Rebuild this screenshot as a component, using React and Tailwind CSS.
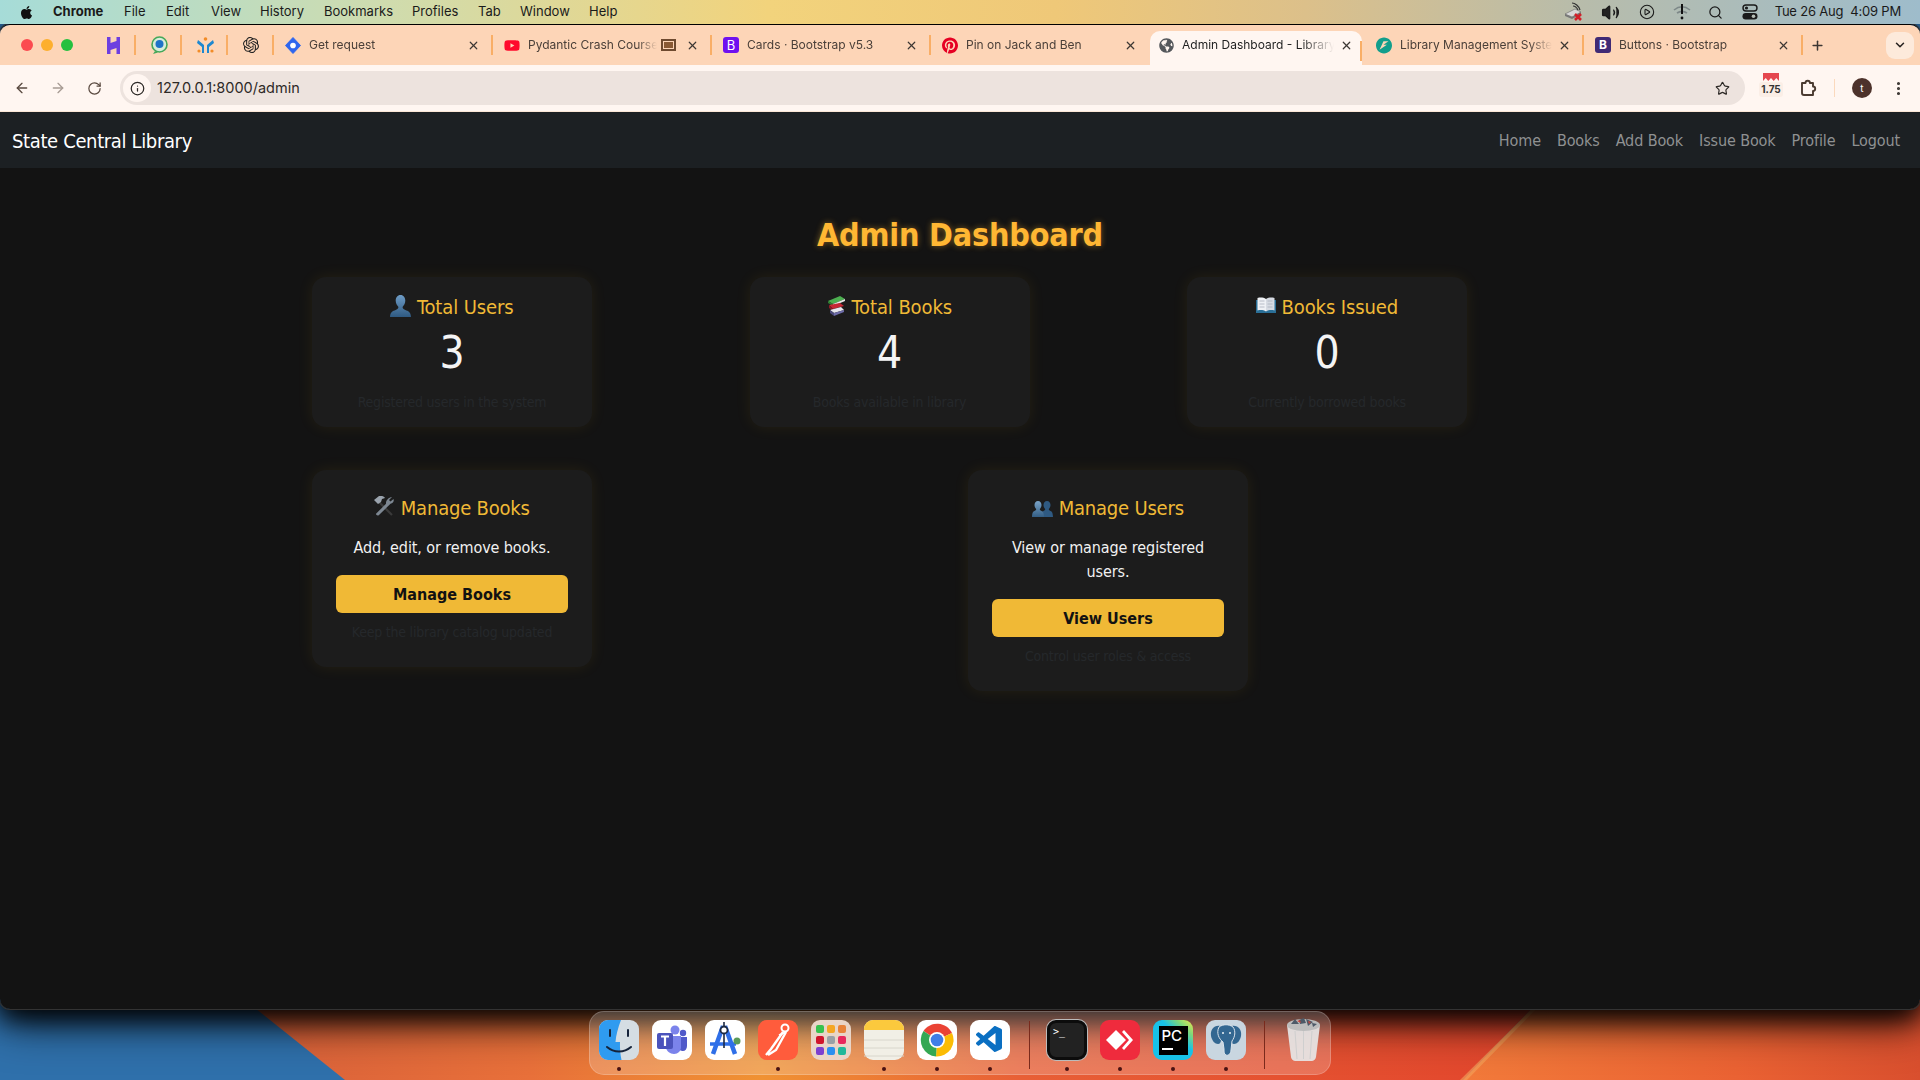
import React from 'react';
import {
  ArrowLeft, ArrowRight, RotateCw, Info, Star, EllipsisVertical,
  X, Plus, ChevronDown, Search, Volume2, CirclePlay,
} from 'lucide-react';
import { FaApple, FaYoutube, FaPinterest, FaGlobeAmericas } from 'react-icons/fa';
import { SiOpenai, SiFastapi } from 'react-icons/si';
import { VscVscode } from 'react-icons/vsc';

const menuItems = [
  { name: 'File', w: 'w-[42px]' },
  { name: 'Edit', w: 'w-[45px]' },
  { name: 'View', w: 'w-[49px]' },
  { name: 'History', w: 'w-[64px]' },
  { name: 'Bookmarks', w: 'w-[88px]' },
  { name: 'Profiles', w: 'w-[66px]' },
  { name: 'Tab', w: 'w-[42px]' },
  { name: 'Window', w: 'w-[69px]' },
  { name: 'Help', w: 'w-[40px]' },
];

const navLinks = ['Home', 'Books', 'Add Book', 'Issue Book', 'Profile', 'Logout'];

// wallpaper only shows below the window
const Wallpaper = () => (
  <svg className="absolute inset-0" width="1920" height="1080" viewBox="0 0 1920 1080">
    <defs>
      <linearGradient id="wpOrange" x1="0" y1="0" x2="1" y2="0">
        <stop offset="0" stopColor="#d9613a" />
        <stop offset="0.22" stopColor="#e8703a" />
        <stop offset="0.4" stopColor="#f09233" />
        <stop offset="0.6" stopColor="#e85f36" />
        <stop offset="1" stopColor="#e2452c" />
      </linearGradient>
      <linearGradient id="wpRight" x1="0" y1="0" x2="1" y2="0">
        <stop offset="0" stopColor="#f27a3a" />
        <stop offset="0.6" stopColor="#ea6233" />
        <stop offset="1" stopColor="#d94f2e" />
      </linearGradient>
    </defs>
    <rect width="1920" height="1080" fill="#2f70ab" />
    <polygon points="245,1000 1540,1000 1463,1080 345,1080" fill="url(#wpOrange)" />
    <polygon points="1540,1000 1920,1000 1920,1080 1463,1080" fill="url(#wpRight)" />
    <polygon points="1536,1005 1540,1005 1467,1080 1460,1080" fill="#f5a35c" opacity="0.6" />
  </svg>
);

const WifiOff = () => (
  <svg width="20" height="18" viewBox="0 0 20 18" fill="none">
    <path d="M2 7c5-4 11-4 16 0M5 10c3-2 7-2 10 0" stroke="#1f2937" strokeOpacity="0.35" strokeWidth="1.6" />
    <path d="M10 1v10" stroke="#111" strokeWidth="2" />
    <circle cx="10" cy="15" r="1.4" fill="#111" />
  </svg>
);

const ControlCenter = () => (
  <svg width="16" height="16" viewBox="0 0 16 16">
    <rect x="1" y="1" width="14" height="6" rx="3" fill="none" stroke="#1a1a1a" strokeWidth="1.4" />
    <circle cx="4.5" cy="4" r="1.6" fill="#1a1a1a" />
    <rect x="0.5" y="9" width="15" height="6.5" rx="3.2" fill="#1a1a1a" />
    <circle cx="11.5" cy="12.2" r="1.8" fill="#b6bdb5" />
  </svg>
);

const DiskIcon = () => (
  <svg width="20" height="20" viewBox="0 0 20 20">
    <path d="M1 12l10-5 6 3-9 5z" fill="#d8d8d8" stroke="#555" strokeWidth="0.5" />
    <path d="M1 12v2l7 3 9-5v-2l-9 5z" fill="#777" />
    <path d="M8 1c3 0 7 3 8 7M9 4c2 0 4 2 5 4" fill="none" stroke="#333" strokeWidth="1.2" />
    <path d="M11 12l6 6M17 12l-6 6" stroke="#d1202a" strokeWidth="2.6" />
  </svg>
);

const MenuBar = () => (
  <div className="relative z-10 flex h-6 shrink-0 items-center bg-[linear-gradient(90deg,#a6dcd8_0%,#cfdcae_20%,#f2d37c_40%,#efc878_55%,#dcc08a_68%,#b8bcaa_82%,#9ebccb_100%)] text-[13px] text-[#1a1a1a]">
    <FaApple className="ml-[19px] text-[15px] text-[#111]" />
    <span className="ml-[19px] w-[71px] font-bold">Chrome</span>
    {menuItems.map((m) => (
      <span key={m.name} className={m.w}>{m.name}</span>
    ))}
    <div className="ml-auto flex items-center">
      <span className="flex w-[37px] justify-center"><DiskIcon /></span>
      <span className="flex w-[36px] justify-center"><Volume2 size={19} strokeWidth={1.6} fill="#222" /></span>
      <span className="flex w-[36px] justify-center"><CirclePlay size={16} strokeWidth={1.6} /></span>
      <span className="flex w-[34px] justify-center"><WifiOff /></span>
      <span className="flex w-[34px] justify-center"><Search size={15} strokeWidth={2} /></span>
      <span className="flex w-[34px] justify-center"><ControlCenter /></span>
      <span className="ml-[8px] mr-[19px] whitespace-pre tracking-[-0.015em]">Tue 26 Aug  4:09 PM</span>
    </div>
  </div>
);

const HubIcon = () => (
  <svg width="15" height="17" viewBox="0 0 15 17">
    <path d="M1 0h3.5v6l6-2V0H14v17h-3.5v-6l-6 2v4H1z" fill="#6d3fe0" />
  </svg>
);
const ChatIcon = () => (
  <svg width="17" height="18" viewBox="0 0 17 18">
    <circle cx="8.5" cy="8.5" r="7.5" fill="#d7ecd8" stroke="#45a85a" strokeWidth="1.6" />
    <circle cx="8.5" cy="8" r="4" fill="#1e73c8" />
    <path d="M4 15l-2 3 5-1.5z" fill="#45a85a" />
  </svg>
);
const CrossIcon = () => (
  <svg width="17" height="17" viewBox="0 0 17 17">
    <circle cx="8.5" cy="2" r="1.8" fill="#f28c28" />
    <path d="M1 3l6 5v8H5v-6L0 6zM16 3l-6 5v8h2v-6l5-4z" fill="#1e88d0" />
    <circle cx="2" cy="14" r="1.6" fill="#f28c28" />
    <circle cx="15" cy="14" r="1.6" fill="#f28c28" />
  </svg>
);
const DiamondIcon = () => (
  <svg width="17" height="17" viewBox="0 0 17 17">
    <path d="M8.5 0l8 8.5-8 8.5-8-8.5z" fill="#2f66ee" stroke="#2f66ee" strokeLinejoin="round" />
    <circle cx="8.5" cy="8.5" r="3" fill="#fff" />
  </svg>
);
const BsPurple = () => (
  <span className="flex h-4 w-4 items-center justify-center rounded-[3px] bg-[#6f10ef] text-[13px] leading-none text-white">B</span>
);
const BsDark = () => (
  <span className="flex h-4 w-4 items-center justify-center rounded-[3px] bg-[#3f2a75] text-[12px] font-bold leading-none text-white">B</span>
);

const Tab = ({ icon, title, extra, active, noSep, className = '' }) => (
  <div className={active
    ? 'relative flex h-[34px] w-[212px] shrink-0 items-center self-end rounded-t-[10px] bg-[#fff6f1] pb-[6px] pl-[8px] pr-[9px]'
    : `relative flex h-[40px] w-[219px] shrink-0 items-center pl-[11px] pr-[13px] ${className}`}>
    <span className="flex w-[16px] shrink-0 justify-center">{icon}</span>
    <span className={active
      ? 'ml-[8px] flex-1 overflow-hidden whitespace-nowrap text-[12px] text-[#1f1f1f] [mask-image:linear-gradient(90deg,#000_78%,transparent)]'
      : 'ml-[8px] flex-1 overflow-hidden whitespace-nowrap text-[12px] text-[#4a3f38] [mask-image:linear-gradient(90deg,#000_85%,transparent)]'}>
      {title}
    </span>
    {extra}
    <X size={13} strokeWidth={2.2} className="ml-[6px] shrink-0 text-[#3c3733]" />
    {!noSep && <span className="absolute right-0 top-[10px] h-[20px] w-[2px] bg-[#f9ae66]" />}
  </div>
);

const PinnedTab = ({ children }) => (
  <div className="relative flex h-[40px] w-[46px] shrink-0 items-center justify-center">
    {children}
    <span className="absolute right-0 top-[10px] h-[20px] w-[2px] bg-[#f9ae66]" />
  </div>
);

const TabStrip = () => (
  <div className="flex h-[40px] shrink-0 items-center bg-[#fdd5b7]">
    <div className="flex w-[90px] shrink-0 items-center gap-[8px] pl-[21px]">
      <span className="h-3 w-3 rounded-full bg-[#fb4b50]" />
      <span className="h-3 w-3 rounded-full bg-[#fdaf2d]" />
      <span className="h-3 w-3 rounded-full bg-[#24c03f]" />
    </div>
    <PinnedTab><HubIcon /></PinnedTab>
    <PinnedTab><ChatIcon /></PinnedTab>
    <PinnedTab><CrossIcon /></PinnedTab>
    <PinnedTab><SiOpenai size={16} className="text-[#222]" /></PinnedTab>
    <Tab icon={<DiamondIcon />} title="Get request" />
    <Tab
      icon={<FaYoutube size={17} className="text-[#ff0a2c]" />}
      title="Pydantic Crash Course"
      extra={<span className="ml-[4px] mr-[4px] flex h-[12px] w-[15px] shrink-0 items-center justify-center border-2 border-[#6e4a2f]"><span className="h-[6px] w-[9px] bg-[#8a5a34]" /></span>}
    />
    <Tab icon={<BsPurple />} title="Cards · Bootstrap v5.3" />
    <Tab icon={<FaPinterest size={17} className="text-[#e60023]" />} title="Pin on Jack and Ben" noSep />
    <Tab active icon={<FaGlobeAmericas size={15} className="text-[#55585c]" />} title="Admin Dashboard - Library" />
    <Tab className="ml-[3px]" icon={<SiFastapi size={17} className="text-[#129e8c]" />} title="Library Management System" />
    <Tab icon={<BsDark />} title="Buttons · Bootstrap" />
    <Plus size={15} strokeWidth={2.4} className="ml-[7px] text-[#3c3733]" />
    <div className="ml-auto mr-[6px] flex h-[27px] w-[28px] items-center justify-center rounded-[9px] bg-[#fdeadb]">
      <ChevronDown size={14} strokeWidth={2.6} className="text-[#2a2522]" />
    </div>
  </div>
);

const RulerIcon = () => (
  <svg width="16" height="8" viewBox="0 0 16 8">
    <path d="M0 0h16v8l-2.7-3-2.6 3-2.7-3-2.7 3-2.6-3L0 8z" fill="#e5474f" />
  </svg>
);

const ExtensionIcon = () => (
  <svg width="18" height="18" viewBox="0 0 18 18" fill="none" stroke="#4a3a30" strokeWidth="1.9" strokeLinejoin="round">
    <path d="M3 4h3.5a2.2 2.2 0 0 1 4.4 0H14v3.500a2.2 2.2 0 0 1 0 4.400V16H5c-1 0-2-1-2-2z" />
  </svg>
);

const Toolbar = () => (
  <div className="flex h-[47px] shrink-0 items-center border-b border-[#fbe6d6] bg-[#fff6f1]">
    <div className="flex w-[120px] shrink-0 items-center text-[#5a4a40]">
      <ArrowLeft size={16} strokeWidth={2} className="ml-[14px]" />
      <ArrowRight size={16} strokeWidth={2} className="ml-[20px] text-[#a89c94]" />
      <RotateCw size={15} strokeWidth={2} className="ml-[21px]" />
    </div>
    <div className="flex h-[34px] w-[1625px] shrink-0 items-center rounded-full bg-[#ede3de]">
      <span className="ml-[3px] flex h-[28px] w-[28px] items-center justify-center rounded-full bg-[#fff6f1]">
        <Info size={15} strokeWidth={2} className="text-[#2e2a27]" />
      </span>
      <span className="ml-[6px] text-[14.5px] text-[#2e2a27]">127.0.0.1:8000/admin</span>
      <Star size={15} strokeWidth={1.9} className="ml-auto mr-[15px] text-[#2e2a27]" />
    </div>
    <div className="ml-[14px] flex h-[30px] w-[24px] shrink-0 flex-col items-center">
      <RulerIcon />
      <span className="mt-[1px] rounded-[3px] bg-[#fbeee6] px-[2px] text-[10px] font-bold leading-[15px] text-[#333]">1.75</span>
    </div>
    <span className="ml-[16px]"><ExtensionIcon /></span>
    <span className="ml-[17px] h-[18px] w-[1px] bg-[#fbd9bd]" />
    <span className="ml-[17px] flex h-[20px] w-[20px] items-center justify-center rounded-full bg-[#4d322b] text-[10px] text-white">t</span>
    <EllipsisVertical size={17} strokeWidth={2.4} className="ml-[18px] text-[#3c3733]" />
  </div>
);

const Navbar = () => (
  <nav className="flex h-14 shrink-0 items-center justify-between bg-[#1c2023] pl-3 pr-3 pt-[1px] [font-family:'DejaVu_Sans',sans-serif] [font-stretch:condensed]">
    <span className="text-[20px] tracking-[-0.018em] text-white">State Central Library</span>
    <div className="flex">
      {navLinks.map((l) => (
        <span key={l} className="px-2 text-[16px] tracking-[-0.007em] text-[#8f9192]">{l}</span>
      ))}
    </div>
  </nav>
);

const PersonEmoji = () => (
  <svg width="21" height="22" viewBox="0 0 21 22" className="inline-block align-[-3px]">
    <defs>
      <linearGradient id="personFill" x1="0" y1="0" x2="0" y2="1">
        <stop offset="0" stopColor="#6e9cc6" />
        <stop offset="1" stopColor="#2f5a82" />
      </linearGradient>
    </defs>
    <path d="M10.5 0c3 0 4.8 2.6 4.8 5.6 0 2.8-1.3 5-2.6 6.2-.4 1.4.5 2.4 2.6 3.2 2.8 1.1 5.4 1.8 5.7 7H0c.3-5.2 2.9-5.9 5.7-7 2.1-.8 3-1.8 2.6-3.2-1.3-1.2-2.6-3.4-2.6-6.2C5.7 2.6 7.5 0 10.5 0z" fill="url(#personFill)" />
  </svg>
);

const BooksEmoji = () => (
  <svg width="19" height="20" viewBox="0 0 19 20" className="inline-block align-[-2px]">
    <path d="M1 5l12-5 5 3-12 5z" fill="#4caf50" />
    <path d="M1 5l5 3v2L1 7z" fill="#2e7d32" />
    <path d="M6 8l12-5v2L6 10z" fill="#e8e8e8" />
    <path d="M2 9l11-2 4 3-11 3z" fill="#c62834" />
    <path d="M2 9l4 4v2L2 12z" fill="#8e1c26" />
    <path d="M3 14l11-3 3 3-10 3z" fill="#e7e7ee" />
    <path d="M3 14l4 3v3l-4-3z" fill="#4b4a7c" />
    <path d="M7 17l10-3v2L7 20z" fill="#6d6ca8" />
  </svg>
);

const OpenBookEmoji = () => (
  <svg width="20" height="17" viewBox="0 0 20 17" className="inline-block align-[0px]">
    <path d="M0 3h20v13H0z" fill="#2a6f97" />
    <path d="M1.5 1c3-.8 6-.6 8.5 1v12.5c-2.5-1.5-5.5-1.8-8.5-1z" fill="#eef1f5" />
    <path d="M18.5 1c-3-.8-6-.6-8.5 1v12.5c2.5-1.5 5.5-1.8 8.5-1z" fill="#d6dbe3" />
    <path d="M3.5 4h5M3.5 7h5M3.5 10h5M11.5 4h5M11.5 7h5M11.5 10h5" stroke="#a9b1bd" strokeWidth="0.8" />
  </svg>
);

const ToolsEmoji = () => (
  <svg width="21" height="20" viewBox="0 0 21 20" className="inline-block align-[-1px]">
    <path d="M4 5l14 14" stroke="#3a3a3a" strokeWidth="2.2" />
    <path d="M0 4l5-4c3-.5 5 .4 6 2L8 3 7 6 4 8z" fill="#9aa3ad" />
    <path d="M18 1l-3 3 1.5 1.5 3-2.5c.8 2.3-.5 4.500-3 4.800L5 19c-1 1-3 .5-3-1.200l10-10c-.4-3 2.500-6.500 6-6.800z" fill="#7d8792" />
  </svg>
);

const BustsEmoji = () => (
  <svg width="21" height="17" viewBox="0 0 21 17" className="inline-block align-[-2px]">
    <defs>
      <linearGradient id="bustFill" x1="0" y1="0" x2="0" y2="1">
        <stop offset="0" stopColor="#7aa4c8" />
        <stop offset="1" stopColor="#335e85" />
      </linearGradient>
    </defs>
    <path d="M15 1c2.2 0 3.5 1.8 3.5 4 0 1.8-.8 3.2-1.7 4 0 1 .6 1.5 1.7 2 1.5.6 2.3 1.500 2.500 6H9c.2-4.500 1-5.400 2.500-6 1.100-.5 1.700-1 1.700-2-.9-.8-1.700-2.200-1.700-4 0-2.200 1.300-4 3.500-4z" fill="#2f5a82" />
    <path d="M6 1c2.2 0 3.5 1.800 3.500 4 0 1.800-.8 3.200-1.700 4 0 1 .6 1.500 1.700 2 1.500.6 2.300 1.500 2.500 6H0c.2-4.500 1-5.400 2.500-6 1.100-.5 1.700-1 1.700-2C3.300 8.200 2.500 6.800 2.500 5 2.500 2.800 3.800 1 6 1z" fill="url(#bustFill)" />
  </svg>
);

const StatCard = ({ icon, title, value, note }) => (
  <div className="w-[280px] rounded-[14px] bg-[#1c1c1c] px-3 pb-[14px] pt-[18px] text-center shadow-[0_0_16px_rgba(255,193,7,0.08)]">
    <h5 className="text-[20px] leading-6 tracking-[-0.005em] text-[#f0b936]">{icon} {title}</h5>
    <div className="mt-[7px] text-[44px] leading-[53px] text-[#f4f4f4]">{value}</div>
    <p className="mt-[13px] text-[14px] leading-[21px] tracking-[-0.015em] text-[#25282b]">{note}</p>
  </div>
);

const ActionCard = ({ icon, title, text, button, note }) => (
  <div className="w-[280px] rounded-[14px] bg-[#1c1c1c] px-6 pb-6 pt-[26px] text-center shadow-[0_0_16px_rgba(255,193,7,0.08)]">
    <h5 className="text-[20px] leading-6 tracking-[-0.01em] text-[#f0b936]">{icon} {title}</h5>
    <p className="mt-4 text-[16px] leading-6 tracking-[-0.006em] text-[#f1f1f1]">{text}</p>
    <button className="mt-[15px] h-[38px] w-full rounded-[6px] bg-[#f0b936] pt-[1px] text-[16px] font-bold text-[#121212]">{button}</button>
    <p className="mt-[9px] text-[14px] leading-[21px] tracking-[-0.015em] text-[#25282b]">{note}</p>
  </div>
);

const Dashboard = () => (
  <main className="flex-1 bg-[#131313] pt-12 [font-family:'DejaVu_Sans',sans-serif] [font-stretch:condensed]">
    <h1 className="text-center text-[32px] font-bold leading-[38px] tracking-[-0.006em] text-[#ffb733] [text-shadow:0_0_6px_rgba(255,183,51,0.45)]">
      Admin Dashboard
    </h1>
    <div className="mt-[23px] flex gap-[157.5px] pl-[312px]">
      <StatCard icon={<PersonEmoji />} title="Total Users" value="3" note="Registered users in the system" />
      <StatCard icon={<BooksEmoji />} title="Total Books" value="4" note="Books available in library" />
      <StatCard icon={<OpenBookEmoji />} title="Books Issued" value="0" note="Currently borrowed books" />
    </div>
    <div className="mt-[43px] flex items-start gap-[376px] pl-[312px]">
      <ActionCard icon={<ToolsEmoji />} title="Manage Books" text="Add, edit, or remove books." button="Manage Books" note="Keep the library catalog updated" />
      <ActionCard icon={<BustsEmoji />} title="Manage Users" text="View or manage registered users." button="View Users" note="Control user roles & access" />
    </div>
  </main>
);

const DockTile = ({ className, children, dot }) => (
  <div className="relative flex h-[40px] w-[40px] shrink-0 items-center justify-center">
    <div className={className}>{children}</div>
    {dot && <span className="absolute bottom-[-11px] left-[18px] h-[4px] w-[4px] rounded-full bg-[#4a1212]" />}
  </div>
);

const whiteTile = 'flex h-[40px] w-[40px] items-center justify-center rounded-[9px] bg-white';

const FinderIcon = () => (
  <svg width="40" height="40" viewBox="0 0 40 40">
    <rect width="40" height="40" rx="9" fill="#d5dde3" />
    <path d="M9 0h13c-3 8-5 15-5.5 22H21c-.2 6 .2 12 1.5 18H9a9 9 0 0 1-9-9V9a9 9 0 0 1 9-9z" fill="#2f9bf0" />
    <path d="M11 10v6M29 10v6" stroke="#15233a" strokeWidth="2" strokeLinecap="round" />
    <path d="M8 27c7 6 17 6 24 0" fill="none" stroke="#15233a" strokeWidth="2" strokeLinecap="round" />
  </svg>
);
const TeamsIcon = () => (
  <svg width="32" height="32" viewBox="0 0 32 32">
    <circle cx="19" cy="6" r="4.5" fill="#7b83eb" />
    <circle cx="27" cy="9" r="3.2" fill="#5059c9" />
    <path d="M22 13h9v9c0 3-2 5-4 5s-5-1-5-5z" fill="#5059c9" />
    <path d="M10 12h15v11c0 4-3 7-7 7s-8-3-8-7z" fill="#7b83eb" />
    <rect x="1" y="9" width="16" height="16" rx="2" fill="#4b53bc" />
    <path d="M5 12.5h8M9 12.5V22" stroke="#fff" strokeWidth="2.2" />
  </svg>
);
const XcodeLikeIcon = () => (
  <svg width="34" height="36" viewBox="0 0 34 36">
    <path d="M15 4L5 32M17 4l10 28" stroke="#2f6fe8" strokeWidth="4.500" fill="none" />
    <path d="M2 22h26" stroke="#2f6fe8" strokeWidth="3.500" />
    <circle cx="16" cy="8" r="3.5" fill="#fff" stroke="#1c2a44" strokeWidth="1.8" />
    <path d="M16 0v4M16 12v14" stroke="#1c2a44" strokeWidth="1.6" />
    <circle cx="29" cy="19" r="3.5" fill="#5a9a5a" />
  </svg>
);
const PostmanIcon = () => (
  <svg width="30" height="34" viewBox="0 0 30 34">
    <circle cx="22" cy="5" r="3.5" fill="none" stroke="#fff" strokeWidth="2" />
    <path d="M20 9L8 26 3 32M23 9L13 27 5 32" fill="none" stroke="#fff" strokeWidth="2.400" />
    <path d="M16 12l7-3" stroke="#fff" strokeWidth="1.8" />
  </svg>
);
const AppsGrid = () => (
  <div className="grid grid-cols-3 gap-[3px]">
    {['bg-[#37c24e]', 'bg-[#f5a623]', 'bg-[#e8833a]', 'bg-[#d0142c]', 'bg-[#9aa0a6]', 'bg-[#e8285c]', 'bg-[#7c3fd0]', 'bg-[#2a8ff0]', 'bg-[#20b89a]'].map((c) => (
      <span key={c} className={`h-[8px] w-[8px] rounded-[2px] ${c}`} />
    ))}
  </div>
);
const NotesIcon = () => (
  <svg width="40" height="40" viewBox="0 0 40 40">
    <rect width="40" height="40" rx="9" fill="#f1efe6" />
    <path d="M0 10V9a9 9 0 0 1 9-9h22a9 9 0 0 1 9 9v1z" fill="#fbc93d" />
    <path d="M0 20h40M0 28h40M0 36h40" stroke="#d8d6cc" strokeWidth="1" />
  </svg>
);
const ChromeIcon = () => (
  <svg width="36" height="36" viewBox="0 0 36 36">
    <path d="M18 18L4.5 9A16.5 16.5 0 0 1 33 11z" fill="#ea4335" />
    <path d="M18 18L33 11a16.5 16.5 0 0 1-16 23.5z" fill="#fbbc05" />
    <path d="M18 18l-1 16.5A16.5 16.5 0 0 1 4.5 9z" fill="#34a853" />
    <circle cx="18" cy="18" r="8" fill="#fff" />
    <circle cx="18" cy="18" r="6.3" fill="#3f7ee8" />
  </svg>
);
const AnyDeskIcon = () => (
  <svg width="30" height="24" viewBox="0 0 30 24">
    <path d="M11 2l10 10-10 10L1 12z" fill="#fff" />
    <path d="M19 2l9 10-9 10-2-2 7-8-7-8z" fill="#fff" />
  </svg>
);
const ElephantIcon = () => (
  <svg width="32" height="34" viewBox="0 0 32 34">
    <path d="M10 3C4 2 0 7 1 13c1 5 4 8 7 8 2 0 3-2 3-4z" fill="#336791" />
    <path d="M22 3c6-1 10 4 9 10-1 5-4 8-7 8-2 0-3-2-3-4z" fill="#336791" />
    <path d="M9 4c4-3 10-3 14 0 3 4 2 10-1 14l-1 9c-.2 4-3 6-5 5-2-.8-2-3-2-6l-1-7C9 16 6 10 9 4z" fill="#336791" stroke="#dbe4ec" strokeWidth="1" />
    <circle cx="13" cy="10" r="1" fill="#eef3f7" />
    <circle cx="20" cy="10" r="1" fill="#eef3f7" />
  </svg>
);
const TrashIcon = () => (
  <svg width="35" height="44" viewBox="0 0 35 44">
    <path d="M1 8h33l-4 32c-.2 1.5-1.5 4-4 4H9c-2.5 0-3.8-2.500-4-4z" fill="#e6e6e6" opacity="0.92" />
    <ellipse cx="17.5" cy="8" rx="16.5" ry="6" fill="#bdbdbd" />
    <path d="M5 7l4-5 4 5zM13 3l5-2 2 5-6 1zM20 2l7 3-5 4zM26 6l5 1-4 3z" fill="#4d5a68" />
    <path d="M11 4l3-1 1 3zM22 4l3 1-2 2z" fill="#c6423a" />
    <path d="M9 14l2 28M17.5 14v28M26 14l-2 28" stroke="#cfcfcf" strokeWidth="1" />
  </svg>
);

const Dock = () => (
  <div className="relative mt-[2px] ml-[589px] flex h-[64px] w-[742px] items-start rounded-[15px] border border-white/20 bg-white/20 pl-[9px] pt-[8px]">
    <div className="flex gap-[13px]">
      <DockTile dot className="h-[40px] w-[40px]"><FinderIcon /></DockTile>
      <DockTile className={whiteTile}><TeamsIcon /></DockTile>
      <DockTile className={whiteTile}><XcodeLikeIcon /></DockTile>
      <DockTile dot className="flex h-[40px] w-[40px] items-center justify-center rounded-[9px] bg-[#ff5c3c]"><PostmanIcon /></DockTile>
      <DockTile className="flex h-[40px] w-[40px] items-center justify-center rounded-[9px] bg-[#e9d5c8]"><AppsGrid /></DockTile>
      <DockTile dot className="h-[40px] w-[40px]"><NotesIcon /></DockTile>
      <DockTile dot className={whiteTile}><ChromeIcon /></DockTile>
      <DockTile dot className={whiteTile}><VscVscode size={32} className="text-[#0a6fc2]" /></DockTile>
    </div>
    <span className="ml-[19px] mt-[1px] h-[48px] w-px bg-[#7a2a1c]" />
    <div className="ml-[17px] flex gap-[13px]">
      <DockTile dot className="flex h-[40px] w-[40px] items-start rounded-[9px] border-[3px] border-[#0c0c0c] bg-[#222] p-[3px] text-[10px] leading-[12px] text-white shadow-[0_0_0_1px_#bbb]">
        <span className="[font-family:'DejaVu_Sans_Mono',monospace]">&gt;_</span>
      </DockTile>
      <DockTile dot className="flex h-[40px] w-[40px] items-center justify-center rounded-[9px] bg-[#ef2b3d]"><AnyDeskIcon /></DockTile>
      <DockTile dot className="flex h-[40px] w-[40px] items-center justify-center rounded-[9px] bg-[linear-gradient(45deg,#18c2e8_60%,#7ed87a_80%,#f0e84a)]">
        <span className="flex h-[29px] w-[29px] flex-col bg-black px-[3px] pt-[2px] text-[15px] font-medium leading-[15px] text-white">PC<span className="mt-[5px] h-[2px] w-[11px] bg-white" /></span>
      </DockTile>
      <DockTile dot className="flex h-[40px] w-[40px] items-center justify-center rounded-[9px] bg-[#c9d6e0]"><ElephantIcon /></DockTile>
    </div>
    <span className="ml-[18px] mt-[1px] h-[48px] w-px bg-[#7a2a1c]" />
    <div className="ml-[21px] mt-[-3px]"><TrashIcon /></div>
  </div>
);

export default function App() {
  return (
    <div className="relative h-[1080px] w-[1920px] overflow-hidden font-['Inter',sans-serif]">
      <Wallpaper />
      <div className="relative flex h-full flex-col">
        <MenuBar />
        <div className="flex h-[985px] shrink-0 flex-col overflow-hidden rounded-[10px] border-t border-black shadow-[0_0_0_1px_#333,0_8px_26px_rgba(0,0,0,0.98),0_14px_44px_rgba(0,0,0,0.75)]">
          <TabStrip />
          <Toolbar />
          <Navbar />
          <Dashboard />
        </div>
        <Dock />
      </div>
    </div>
  );
}
